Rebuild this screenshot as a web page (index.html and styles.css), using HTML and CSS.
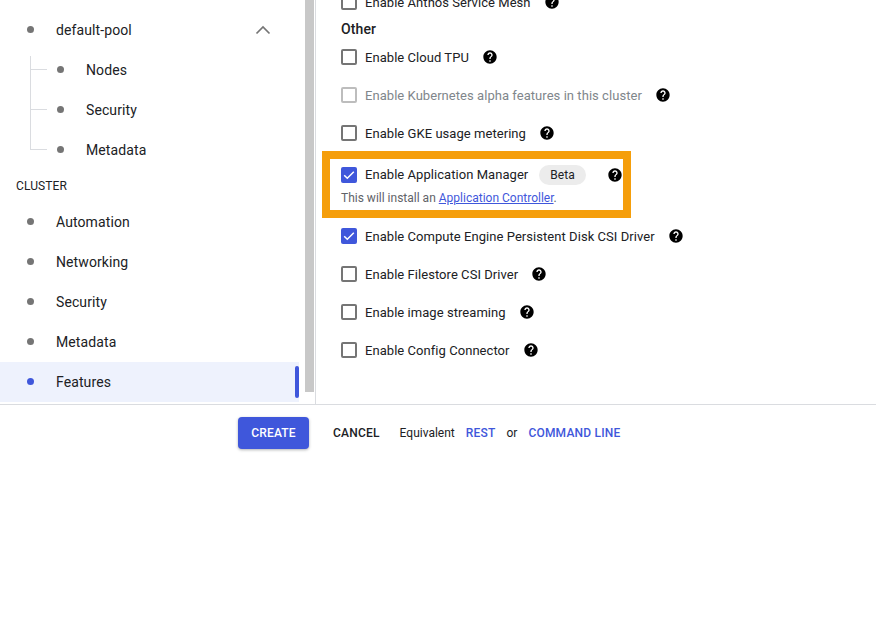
FILE: index.html
```html
<!DOCTYPE html>
<html lang="en">
<head>
<meta charset="utf-8">
<title>Create cluster</title>
<link rel="stylesheet" href="styles.css">
</head>
<body>
<svg class="defs" width="0" height="0" aria-hidden="true">
  <symbol id="help" viewBox="0 0 24 24"><path d="M12 2C6.48 2 2 6.48 2 12s4.48 10 10 10 10-4.48 10-10S17.52 2 12 2zm1 17h-2v-2h2v2zm2.07-7.75l-.9.92C13.45 12.9 13 13.5 13 15h-2v-.5c0-1.1.45-2.1 1.17-2.83l1.24-1.26c.37-.36.59-.86.59-1.41 0-1.1-.9-2-2-2s-2 .9-2 2H8c0-2.21 1.79-4 4-4s4 1.79 4 4c0 .88-.36 1.68-.93 2.25z"/></symbol>
  <symbol id="tick" viewBox="0 0 16 16"><path d="M3.2 8.2l3.1 3.1 6.5-6.5" fill="none" stroke="#fff" stroke-width="1.5"/></symbol>
</svg>
<main class="main">
  <nav class="side">
    <div class="side-scroll">
      <div class="nav-item"><span class="dot"></span><span class="nav-label">default-pool</span>
        <svg class="chev" viewBox="0 0 16 10" width="16" height="10"><path d="M1.5 8.5L8 2l6.5 6.5" fill="none" stroke="#757575" stroke-width="1.7"/></svg>
      </div>
      <div class="tree">
        <div class="nav-item sub"><span class="dot"></span><span class="nav-label">Nodes</span></div>
        <div class="nav-item sub"><span class="dot"></span><span class="nav-label">Security</span></div>
        <div class="nav-item sub last"><span class="dot"></span><span class="nav-label">Metadata</span></div>
      </div>
      <div class="nav-head">CLUSTER</div>
      <div class="nav-item"><span class="dot"></span><span class="nav-label">Automation</span></div>
      <div class="nav-item"><span class="dot"></span><span class="nav-label">Networking</span></div>
      <div class="nav-item"><span class="dot"></span><span class="nav-label">Security</span></div>
      <div class="nav-item"><span class="dot"></span><span class="nav-label">Metadata</span></div>
      <div class="nav-item active"><span class="dot"></span><span class="nav-label">Features</span><span class="bar"></span></div>
    </div>
    <div class="scrollbar"><div class="thumb"></div></div>
  </nav>
  <section class="content">
    <div class="opt clipped"><span class="box"></span><span class="opt-label">Enable Anthos Service Mesh</span><svg class="help"><use href="#help"/></svg></div>
    <h2 class="group">Other</h2>
    <div class="opt"><span class="box"></span><span class="opt-label">Enable Cloud TPU</span><svg class="help"><use href="#help"/></svg></div>
    <div class="opt disabled"><span class="box"></span><span class="opt-label">Enable Kubernetes alpha features in this cluster</span><svg class="help"><use href="#help"/></svg></div>
    <div class="opt"><span class="box"></span><span class="opt-label">Enable GKE usage metering</span><svg class="help"><use href="#help"/></svg></div>
    <div class="highlight">
      <div class="opt inner"><span class="box checked"><svg class="tick"><use href="#tick"/></svg></span><span class="opt-label">Enable Application Manager</span><span class="chip">Beta</span><svg class="help"><use href="#help"/></svg></div>
      <p class="hint">This will install an <a href="#" class="link">Application Controller</a>.</p>
    </div>
    <div class="opt"><span class="box checked"><svg class="tick"><use href="#tick"/></svg></span><span class="opt-label">Enable Compute Engine Persistent Disk CSI Driver</span><svg class="help"><use href="#help"/></svg></div>
    <div class="opt"><span class="box"></span><span class="opt-label">Enable Filestore CSI Driver</span><svg class="help"><use href="#help"/></svg></div>
    <div class="opt"><span class="box"></span><span class="opt-label">Enable image streaming</span><svg class="help"><use href="#help"/></svg></div>
    <div class="opt"><span class="box"></span><span class="opt-label">Enable Config Connector</span><svg class="help"><use href="#help"/></svg></div>
  </section>
</main>
<footer class="actions">
  <button class="btn-create" type="button">CREATE</button>
  <button class="btn-cancel" type="button">CANCEL</button>
  <span class="equiv">Equivalent</span>
  <a href="#" class="cmd rest">REST</a>
  <span class="or">or</span>
  <a href="#" class="cmd">COMMAND LINE</a>
</footer>
</body>
</html>
```

FILE: styles.css
```css
* { box-sizing: border-box; }
html, body { margin: 0; height: 100%; background: #fff; }
body { font-family: Roboto, "Liberation Sans", sans-serif; color: #202124; overflow: hidden; }
.defs { position: absolute; }

.main { display: flex; height: 405px; border-bottom: 1px solid #dadce0; overflow: hidden; }

.side { display: flex; width: 316px; flex: none; border-right: 1px solid #dadce0; }
.side-scroll { width: 299px; flex: none; padding-top: 10px; }
.scrollbar { width: 16px; padding: 0 1px 0 6px; }
.thumb { width: 9px; height: 392px; background: #c8c8c8; }

.nav-item { display: flex; align-items: center; height: 40px; padding-left: 27px; font-size: 14px; letter-spacing: .1px; position: relative; }
.dot { width: 7px; height: 7px; border-radius: 50%; background: #757575; flex: none; margin-top: -1px; }
.nav-label { margin-left: 22px; }
.chev { position: absolute; left: 255px; top: 15px; }

.tree { position: relative; }
.tree::before { content: ""; position: absolute; left: 30px; top: 6px; bottom: 20px; width: 1px; background: #dadce0; }
.nav-item.sub { padding-left: 57px; }
.nav-item.sub::before { content: ""; position: absolute; left: 30px; top: 19px; width: 17px; height: 1px; background: #dadce0; }

.nav-head { height: 32px; padding-left: 16px; font-size: 12px; font-weight: 400; line-height: 32px; color: #202124; letter-spacing: .1px; }
.nav-head { margin-bottom: 0; margin-top: 0; }

.active { background: #eef2fd; }
.active .dot { background: #3f57db; }
.bar { position: absolute; right: 0; top: 4px; bottom: 4px; width: 4px; border-radius: 2px; background: #3f57db; }

.content { flex: 1; padding-left: 25px; margin-top: -17px; min-width: 0; }
.opt { display: flex; align-items: center; height: 38px; font-size: 13px; letter-spacing: .05px; color: #202124; }
.box { width: 16px; height: 16px; flex: none; border: 2px solid #757575; border-radius: 2px; margin-right: 8px; }
.box.checked { border: 0; background: #3f57db; }
.tick { display: block; width: 16px; height: 16px; }
.help { width: 16px; height: 16px; flex: none; margin-left: 13px; fill: #000; }

.group { margin: 0; height: 18px; margin-top: -1px; margin-bottom: 0; font-size: 14px; font-weight: 500; line-height: 18px; letter-spacing: .1px; }

.disabled { color: #80868b; }
.disabled .box { border-color: #bdbdbd; }

.highlight { width: 309px; height: 67px; margin: -1px 0 -1px -19px; border: 8px solid #f59e0b; padding: 0 0 0 11px; }
.opt.inner { height: 33px; margin-top: -1px; }
.chip { height: 20px; padding: 0 11px; margin-left: 11px; font-size: 12px; line-height: 20px; background: #ececec; border-radius: 10px; }
.inner .help { margin-left: 21px; }
.hint { margin: -1px 0 0; font-size: 12px; line-height: 16px; color: #5f6368; }
.link { color: #3f57db; text-decoration: underline; }

.actions { display: flex; align-items: center; height: 56px; padding-left: 238px; font-size: 12px; }
.btn-create { width: 71px; height: 32px; padding: 0; border: 0; border-radius: 4px; background: #3f57db; color: #fff; font: 500 12px Roboto, "Liberation Sans", sans-serif; letter-spacing: .2px; box-shadow: 0 1px 3px rgba(60,64,67,.4); }
.btn-cancel { margin-left: 24px; padding: 0; border: 0; background: none; color: #202124; font: 500 12px Roboto, "Liberation Sans", sans-serif; letter-spacing: .2px; }
.equiv { margin-left: 20px; }
.cmd { color: #3f57db; font-weight: 500; text-decoration: none; letter-spacing: .2px; }
.rest { margin-left: 11px; }
.or { margin: 0 11px; }
```
